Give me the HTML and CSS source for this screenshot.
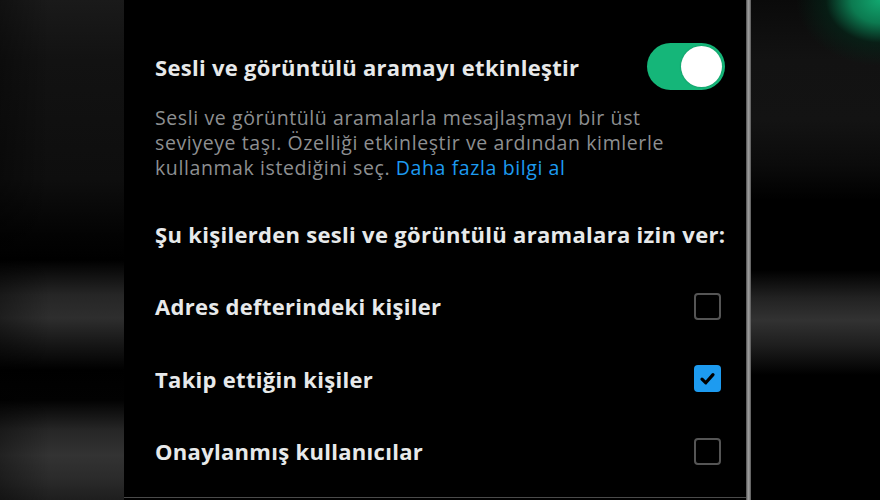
FILE: index.html
```html
<!DOCTYPE html>
<html lang="tr">

<head>
    <meta charset="UTF-8">
    <meta name="viewport" content="width=device-width, initial-scale=1.0">
    <link rel="stylesheet" href="styles.css">
</head>

<body>
    <div class="frame">
        <div class="side side-left"></div>

        <div class="panel">
            <div class="setting-head">
                <h2 class="title">Sesli ve görüntülü aramayı etkinleştir</h2>
                <div class="toggle on">
                    <span class="knob"></span>
                </div>
            </div>

            <p class="desc">
                Sesli ve görüntülü aramalarla mesajlaşmayı bir üst<br>
                seviyeye taşı. Özelliği etkinleştir ve ardından kimlerle<br>
                kullanmak istediğini seç. <a href="#">Daha fazla bilgi al</a>
            </p>

            <h2 class="title section">Şu kişilerden sesli ve görüntülü aramalara izin ver:</h2>

            <div class="options">
                <label class="option">
                    <span class="option-label">Adres defterindeki kişiler</span>
                    <span class="box"></span>
                </label>
                <label class="option">
                    <span class="option-label">Takip ettiğin kişiler</span>
                    <span class="box checked">
                        <svg viewBox="0 0 27 27" width="27" height="27">
                            <path d="M8 14.2 L11.8 17.8 L19 9.6" fill="none" stroke="#000" stroke-width="3.2" stroke-linecap="round" stroke-linejoin="round" />
                        </svg>
                    </span>
                </label>
                <label class="option">
                    <span class="option-label">Onaylanmış kullanıcılar</span>
                    <span class="box"></span>
                </label>
            </div>
        </div>

        <div class="divider"></div>
        <div class="side side-right"></div>
    </div>
</body>

</html>
```

FILE: styles.css
```css
* {
    box-sizing: border-box;
}

body {
    margin: 0;
    background-color: #000;
    font-family: 'Open Sans', 'Liberation Sans', sans-serif;
    color: #e7e9ea;
}

.frame {
    display: flex;
    width: 880px;
    height: 500px;
    overflow: hidden;
}

/* blurred phone edges on both sides */
.side {
    flex: none;
    height: 100%;
}

.side-left {
    width: 124px;
    background:
        linear-gradient(90deg, rgba(0, 0, 0, 0.35) 0%, rgba(0, 0, 0, 0) 40%),
        linear-gradient(180deg,
            #1a1a1a 0px,
            #121212 60px,
            #0e0e0e 180px,
            #030303 235px,
            #000 260px,
            #262626 295px,
            #2e2e2e 318px,
            #1a1a1a 340px,
            #000 370px,
            #020202 400px,
            #262626 430px,
            #333 455px,
            #2a2a2a 480px,
            #1e1e1e 500px);
}

.side-right {
    width: 130px;
    background:
        radial-gradient(ellipse 85px 66px at 100% 0, #12a870 0%, #0c7a50 35%, rgba(4, 40, 26, 0.6) 65%, rgba(0, 0, 0, 0) 100%),
        linear-gradient(180deg,
            #0a0a0a 0px,
            #121212 60px,
            #131313 120px,
            #0b0b0b 165px,
            #000 200px,
            #000 270px,
            #222 298px,
            #323232 320px,
            #1e1e1e 345px,
            #000 375px,
            #000 500px);
}

.divider {
    flex: none;
    width: 5px;
    height: 100%;
    background: linear-gradient(90deg, #4a4a4a, #9a9a9a 40%, #9a9a9a 60%, #555);
}

.panel {
    flex: none;
    width: 622px;
    height: 498px;
    padding: 43px 21px 0 31px;
    background-color: #000;
    border-bottom: 1px solid #4a4a4a;
}

.setting-head {
    display: flex;
    justify-content: space-between;
    align-items: center;
    height: 47px;
}

.title {
    margin: 0;
    font-size: 22px;
    font-weight: 700;
    line-height: 30px;
    letter-spacing: 0.3px;
    color: #e7e9ea;
}

.toggle {
    width: 78px;
    height: 47px;
    border-radius: 24px;
    background-color: #15b679;
    padding: 3px;
    display: flex;
    justify-content: flex-end;
}

.knob {
    width: 41px;
    height: 41px;
    border-radius: 50%;
    background-color: #fff;
    box-shadow: 0 0 2px rgba(0, 0, 0, 0.25);
}

.desc {
    margin: 15px 0 0;
    font-size: 19.5px;
    line-height: 25px;
    letter-spacing: 0.6px;
    color: #8d8f91;
}

.desc a {
    color: #1d9bf0;
    text-decoration: none;
}

.section {
    margin-top: 39px;
    white-space: nowrap;
}

.options {
    margin-top: 21px;
    padding-right: 4px;
}

.option {
    display: flex;
    justify-content: space-between;
    align-items: center;
    height: 72.5px;
}

.option-label {
    font-size: 22px;
    font-weight: 700;
    letter-spacing: 0.3px;
    color: #e7e9ea;
}

.box {
    width: 27px;
    height: 27px;
    border: 2.5px solid #555;
    border-radius: 4px;
}

.box.checked {
    border: none;
    background-color: #1d9bf0;
}

.box svg {
    display: block;
}
```
